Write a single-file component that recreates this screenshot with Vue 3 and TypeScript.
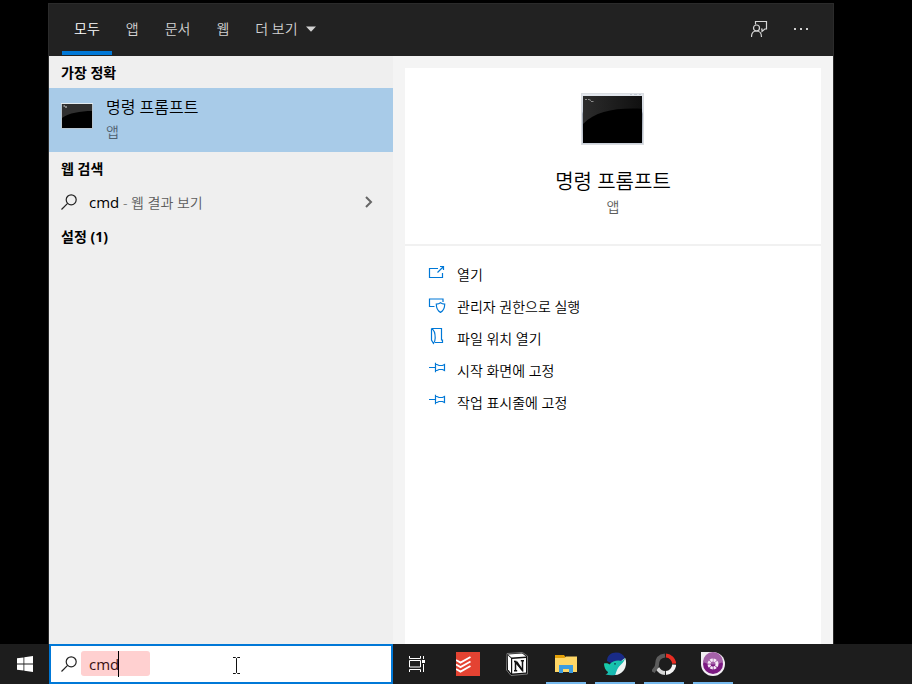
<script setup lang="ts">
import { ref } from 'vue'

type ActionIcon = 'open' | 'admin' | 'folder' | 'pin'
interface Action {
  label: string
  icon: ActionIcon
}

const query = ref('cmd')
const activeTab = ref('모두')
const tabs: string[] = ['모두', '앱', '문서', '웹']
const actions: Action[] = [
  { label: '열기', icon: 'open' },
  { label: '관리자 권한으로 실행', icon: 'admin' },
  { label: '파일 위치 열기', icon: 'folder' },
  { label: '시작 화면에 고정', icon: 'pin' },
  { label: '작업 표시줄에 고정', icon: 'pin' },
]
</script>

<template>
  <div class="desktop">
    <main class="panel">
      <header class="header">
        <nav class="tabs">
          <button
            v-for="tab in tabs"
            :key="tab"
            type="button"
            class="tab"
            :class="{ active: tab === activeTab }"
            @click="activeTab = tab"
          >
            {{ tab }}
          </button>
          <button type="button" class="tab more">
            더 보기
            <svg width="10" height="6" viewBox="0 0 10 6"><path d="M0 0.5h10L5 5.8z" fill="#d2d2d2" /></svg>
          </button>
        </nav>
        <div class="tools">
          <button type="button" class="tool" aria-label="피드백">
            <svg width="18" height="18" viewBox="0 0 18 18" fill="none" stroke="#d6d6d6" stroke-width="1.2">
              <path d="M4.500 3.500V.5h11v7.500h-1.700l-2.800 2.500V8h-1" />
              <circle cx="5.500" cy="7" r="3" />
              <path d="M.5 16c0-3.600 2-6 5-6s5 2.400 5 6" />
            </svg>
          </button>
          <button type="button" class="tool" aria-label="옵션">
            <svg width="16" height="4" viewBox="0 0 16 4" fill="#d0d0d0">
              <rect x="1" y="0" width="2" height="2" /><rect x="7" y="0" width="2" height="2" /><rect x="13" y="0" width="2" height="2" />
            </svg>
          </button>
        </div>
      </header>

      <div class="body">
        <section class="results">
          <h2 class="group">가장 정확</h2>
          <button type="button" class="best">
            <svg class="best-icon" width="32" height="26" viewBox="0 0 32 26">
              <rect width="32" height="26" fill="#b9c6d0" />
              <rect x="1" y="1" width="30" height="24" fill="#000" />
              <path d="M1 1h30v7C19 8 8 10 1 15z" fill="#303030" />
              <path d="M2.500 3h1.500M4 4h2" stroke="#ddd" />
              <path d="M0 .5h32" stroke="#e3ebf0" />
            </svg>
            <span class="best-text">
              <span class="best-name">명령 프롬프트</span>
              <span class="best-kind">앱</span>
            </span>
          </button>
          <h2 class="group">웹 검색</h2>
          <button type="button" class="web">
            <svg width="16" height="16" viewBox="0 0 16 16" fill="none" stroke="#222" stroke-width="1.2">
              <circle cx="10.200" cy="5.800" r="5" /><path d="M6.600 9.400L.5 15.500" />
            </svg>
            <span class="web-text">cmd<span class="web-hint"> - 웹 결과 보기</span></span>
            <svg class="chevron" width="8" height="12" viewBox="0 0 8 12" fill="none" stroke="#666" stroke-width="2">
              <path d="M1 1l5 5-5 5" />
            </svg>
          </button>
          <h2 class="group">설정 (1)</h2>
        </section>

        <section class="preview">
          <div class="card">
            <div class="hero">
              <svg width="64" height="53" viewBox="0 0 64 53">
                <defs>
                  <linearGradient id="gloss" x1="0" y1="0" x2="1" y2="0">
                    <stop offset="0" stop-color="#2c2c2c" /><stop offset="1" stop-color="#101010" />
                  </linearGradient>
                  <linearGradient id="frame" x1="0" y1="0" x2="0" y2="1">
                    <stop offset="0" stop-color="#e4e8ee" /><stop offset=".35" stop-color="#ccd4df" /><stop offset=".4" stop-color="#9da6b3" /><stop offset="1" stop-color="#cbd1da" />
                  </linearGradient>
                </defs>
                <rect x=".5" y=".5" width="62" height="51" fill="url(#frame)" stroke="#dadde1" />
                <path d="M49 1.500h2M53 1.500h3M58 1.500h2" stroke="#c3cad4" />
                <rect x="2" y="3" width="59" height="47" fill="#000" />
                <path d="M2 3h59v12.700C34 14.500 15 18 2 31z" fill="url(#gloss)" />
                <path d="M4 6.500h2M7 6.500h1M8.500 6l1 2M10 8.500h2.500" stroke="#8c8c8c" fill="none" />
              </svg>
              <h1 class="hero-name">명령 프롬프트</h1>
              <p class="hero-kind">앱</p>
            </div>
            <ul class="actions">
              <li v-for="action in actions" :key="action.label">
                <button type="button" class="action">
                  <svg class="action-icon" width="18" height="18" viewBox="0 0 18 18" fill="none" stroke="#0078d7" stroke-width="1.2">
                    <template v-if="action.icon === 'open'">
                      <path d="M10 4.500H1.500v9h13V9M9.500 8.500L15.500 2.500M12 2.500h3.500V6" />
                    </template>
                    <template v-else-if="action.icon === 'admin'">
                      <path d="M6.500 10.500h-5v-7.500h13.500V6" />
                      <path d="M12.500 6.800c1.300 1 2.600 1.300 4.200 1.300 0 4.200-1 6.700-4.200 8.300-3.200-1.600-4.200-4.100-4.200-8.300 1.600 0 2.900-.3 4.200-1.300z" />
                    </template>
                    <template v-else-if="action.icon === 'folder'">
                      <path d="M3.500.5h10V12h1v2.500H7M3.500.5V12l2 3.500c1.500-2 1.700-3 1.700-5.500C7.200 6 6.500 2 3.500.5" />
                    </template>
                    <template v-else>
                      <path d="M1 7.500h6M7.500 2.700v9.600M7.500 4.500h1.500l2 1h3.500l2-1v6l-2-1H11l-2 1H7.500" />
                    </template>
                  </svg>
                  <span>{{ action.label }}</span>
                </button>
              </li>
            </ul>
          </div>
        </section>
      </div>
    </main>

    <footer class="taskbar">
      <button type="button" class="start" aria-label="시작">
        <svg width="16" height="16" viewBox="0 0 16 16" fill="#fff">
          <path d="M0 2.300L6.500 1.400v6.100H0zM7.300 1.300L16 0v7.500H7.300zM0 8.400h6.500v6.200L0 13.700zM7.300 8.400H16V16l-8.700-1.300z" />
        </svg>
      </button>
      <label class="search">
        <svg width="16" height="16" viewBox="0 0 16 16" fill="none" stroke="#222" stroke-width="1.200">
          <circle cx="10.200" cy="5.800" r="5" /><path d="M6.600 9.400L.5 15.500" />
        </svg>
        <span class="highlight"></span>
        <input v-model="query" class="query" type="text" aria-label="검색" spellcheck="false" />
        <span class="caret"></span>
        <svg class="pointer" width="9" height="17" viewBox="0 0 9 17" fill="none" stroke="#111">
          <path d="M1 .5h2.500l1 1 1-1H8M4.500 1.500v14M1 16.500h2.500l1-1 1 1H8" />
        </svg>
      </label>
      <button type="button" class="task-view" aria-label="작업 보기">
        <svg width="16" height="16" viewBox="0 0 16 16" fill="none" stroke="#fff">
          <path d="M.5 0v2.500h11V0M.5 16v-2.500h11V16M.5 4.500h11v6.500H.5zM14.500 0v3M14.500 8v8" />
          <rect x="13" y="4" width="3" height="3" fill="#fff" stroke="none" />
        </svg>
      </button>
      <div class="apps">
        <button type="button" class="app" aria-label="Todoist">
          <svg width="24" height="24" viewBox="0 0 24 24">
            <rect width="24" height="24" fill="#e44332" />
            <path d="M0 8l4.500 2.600L14.500 5M0 12.500l4.500 2.600 10-5.600M0 17l4.500 2.600 10-5.600" fill="none" stroke="#fff" stroke-width="1.800" />
          </svg>
        </button>
        <button type="button" class="app" aria-label="Notion">
          <svg width="24" height="24" viewBox="0 0 24 24">
            <path d="M2 1.500L17.500.5 22.500 4v18L6 23.500 1.500 18z" fill="#111" stroke="#777" />
            <path d="M3 2.500l14.200-1 4 3L6.500 5.500z" fill="#fff" />
            <path d="M3 3.500l3 2.700v15L3 17.300z" fill="#fff" />
            <path d="M7.200 7L21 6v14.500L7.200 21.500z" fill="#fff" />
            <path d="M10.500 18.500v-8.500l7 8.500v-9.500M9 9.500h2.500M9 18.700h3.200M15.800 8.800h3.200" fill="none" stroke="#111" stroke-width="1.500" />
            <path d="M10 9.500h2.500l6 9H16.500z" fill="#111" />
          </svg>
        </button>
        <button type="button" class="app running" aria-label="파일 탐색기">
          <svg width="22" height="20" viewBox="0 0 22 20">
            <path d="M0 1h9l1.500 2v3H0z" fill="#e3a008" />
            <path d="M0 4h9.500l1.500-1.500h11V18H0z" fill="#ffd766" />
            <path d="M4 19v-8h14v8h-4v-4H8v4z" fill="#3c9ce0" />
          </svg>
        </button>
        <button type="button" class="app running" aria-label="Whale">
          <svg width="24" height="24" viewBox="0 0 24 24">
            <defs>
              <linearGradient id="whale" x1="0" y1="0" x2="1" y2="1">
                <stop offset="0" stop-color="#17d6a4" /><stop offset="1" stop-color="#18a9ba" />
              </linearGradient>
            </defs>
            <path d="M4 9C4 3.500 8 .5 13 .5c4.500 0 7.500 2 9 5.500l-5 5H8z" fill="#192b87" />
            <path d="M22.200 6C25 13 21 22.500 12 23c0-7 4-13 10.200-17z" fill="#edf3f2" />
            <path d="M1 11.500c2-.5 4-.5 5.500 1C9 9 15 7.500 18.500 9c1.500-.8 2.700-1.800 3.700-3-1 5-6 7-8 11.500-.9 2-1.200 3.500-2 5.500-3 .5-6.500.5-9.700-.4 1.500-.7 2.500-1.500 2.500-2.600C2.500 18.500 1 15 1 11.500z" fill="url(#whale)" />
            <circle cx="12" cy="11.800" r=".9" fill="#0a4854" />
          </svg>
        </button>
        <button type="button" class="app running" aria-label="화면 녹화">
          <svg width="24" height="24" viewBox="0 0 24 24" fill="none" stroke-width="4">
            <path d="M14 3.500a8.800 8.800 0 0 1 8.200 8.200" stroke="#e82c22" />
            <path d="M22.200 12.700a8.800 8.800 0 0 1-8.200 8.200" stroke="#f4f4f4" />
            <path d="M13 20.900a8.800 8.800 0 0 1-7.500-4.800" stroke="#d6d6d6" />
            <path d="M13 3.500C6.500 4 5 9 5 13c0 3-2 3-4 7" stroke="#5c5c5c" />
          </svg>
        </button>
        <button type="button" class="app running" aria-label="화면 캡처">
          <svg width="24" height="24" viewBox="0 0 24 24">
            <path d="M0 0h12a12 12 0 1 1-12 12z" fill="#f2eef3" />
            <circle cx="12" cy="12" r="10" fill="#7c1a82" />
            <path d="M2 10a10 10 0 0 1 20 0q-10 5-20 0z" fill="#a461a8" />
            <circle cx="12" cy="12" r="4" fill="none" stroke="#f5e9f6" stroke-width="3" stroke-dasharray="2.500 .64" />
          </svg>
        </button>
      </div>
    </footer>
  </div>
</template>

<style>
html,
body {
  margin: 0;
  background: #000;
}
</style>

<style scoped>
.desktop {
  display: flex;
  flex-direction: column;
  min-height: 100vh;
  background: #000;
  color: #000;
  font-family: 'Open Sans', 'Noto Sans CJK KR', sans-serif;
  font-size: 14px;
  font-weight: 350;
  line-height: 20px;
}

.desktop * {
  box-sizing: border-box;
}

button {
  margin: 0;
  padding: 0;
  border: 0;
  background: none;
  color: inherit;
  font: inherit;
  text-align: left;
}

svg {
  display: block;
  flex: none;
}

.panel {
  flex: 1;
  display: flex;
  flex-direction: column;
  margin: 3px 78px 0 48px;
  border: 1px solid #2b2b2b;
  border-bottom: 0;
}

.header {
  display: flex;
  justify-content: space-between;
  height: 52px;
  padding: 0 24px 0 13px;
  background: #222;
}

.tabs {
  display: flex;
  gap: 2px;
}

.tab {
  padding: 0 12px;
  border-top: 3px solid transparent;
  border-bottom: 4px solid transparent;
  margin-bottom: 1px;
  color: #d2d2d2;
}

.tab.active {
  border-bottom-color: #0078d7;
  color: #fff;
}

.more {
  display: flex;
  align-items: center;
  gap: 8px;
}

.tools {
  display: flex;
  align-items: center;
  gap: 24px;
}

.body {
  flex: 1;
  display: grid;
  grid-template-columns: 344px minmax(0, 1fr);
}

.results {
  background: #efefef;
}

.group {
  margin: 0;
  padding: 7px 12px 5px;
  font-size: 14px;
  font-weight: 700;
  line-height: 20px;
}

.best {
  display: flex;
  gap: 13px;
  width: 100%;
  height: 64px;
  padding: 8px 12px;
  background: #a8cbe8;
}

.best-icon {
  margin-top: 7px;
}

.best-text {
  display: flex;
  flex-direction: column;
  gap: 4px;
}

.best-name {
  font-size: 16px;
  line-height: 22px;
}

.best-kind {
  color: #50616e;
}

.web {
  display: flex;
  align-items: center;
  gap: 12px;
  width: 100%;
  height: 36px;
  padding: 0 20px 0 12px;
}

.web-text {
  flex: 1;
  font-size: 15px;
  font-weight: 400;
}

.web-hint {
  color: #5c5c5c;
  font-size: 14px;
  font-weight: 350;
}

.preview {
  display: flex;
  padding: 12px 12px 0;
  background: #f4f4f4;
}

.card {
  flex: 1;
  background: #fff;
}

.hero {
  display: flex;
  flex-direction: column;
  align-items: center;
  height: 178px;
  padding-top: 25px;
  border-bottom: 2px solid #f1f1f1;
}

.hero-name {
  margin: 22px 0 0;
  font-size: 20px;
  font-weight: 350;
  line-height: 28px;
}

.hero-kind {
  margin: 1px 0 0;
  color: #5c5c5c;
}

.actions {
  margin: 0;
  padding: 13px 0;
  list-style: none;
}

.action {
  display: flex;
  align-items: center;
  gap: 11px;
  width: 100%;
  height: 32px;
  padding: 0 23px;
}

.action-icon {
  margin-bottom: 5px;
}

.taskbar {
  display: flex;
  height: 40px;
  background: #1d1d1d;
}

.start {
  display: flex;
  align-items: center;
  justify-content: center;
  width: 49px;
}

.search {
  position: relative;
  display: flex;
  align-items: center;
  gap: 12px;
  width: 344px;
  padding: 0 10px;
  border: 2px solid #0078d7;
  background: #fff;
}

.highlight {
  position: absolute;
  left: 30px;
  top: 5px;
  width: 69px;
  height: 25px;
  border-radius: 3px;
  background: #ffd0d0;
}

.query {
  position: relative;
  flex: 1;
  min-width: 0;
  padding: 0;
  border: 0;
  outline: 0;
  background: transparent;
  color: #3a1010;
  font: inherit;
  font-size: 15px;
  font-weight: 400;
}

.caret {
  position: absolute;
  left: 67px;
  top: 5px;
  width: 1px;
  height: 26px;
  background: #000;
}

.pointer {
  position: absolute;
  left: 181px;
  top: 11px;
}

.task-view {
  display: flex;
  align-items: center;
  justify-content: center;
  width: 48px;
}

.apps {
  display: flex;
  gap: 9px;
  margin-left: 7px;
}

.app {
  display: flex;
  align-items: center;
  justify-content: center;
  width: 40px;
  border-top: 2px solid transparent;
  border-bottom: 2px solid transparent;
}

.app.running {
  border-bottom-color: #76b9ed;
}
</style>
